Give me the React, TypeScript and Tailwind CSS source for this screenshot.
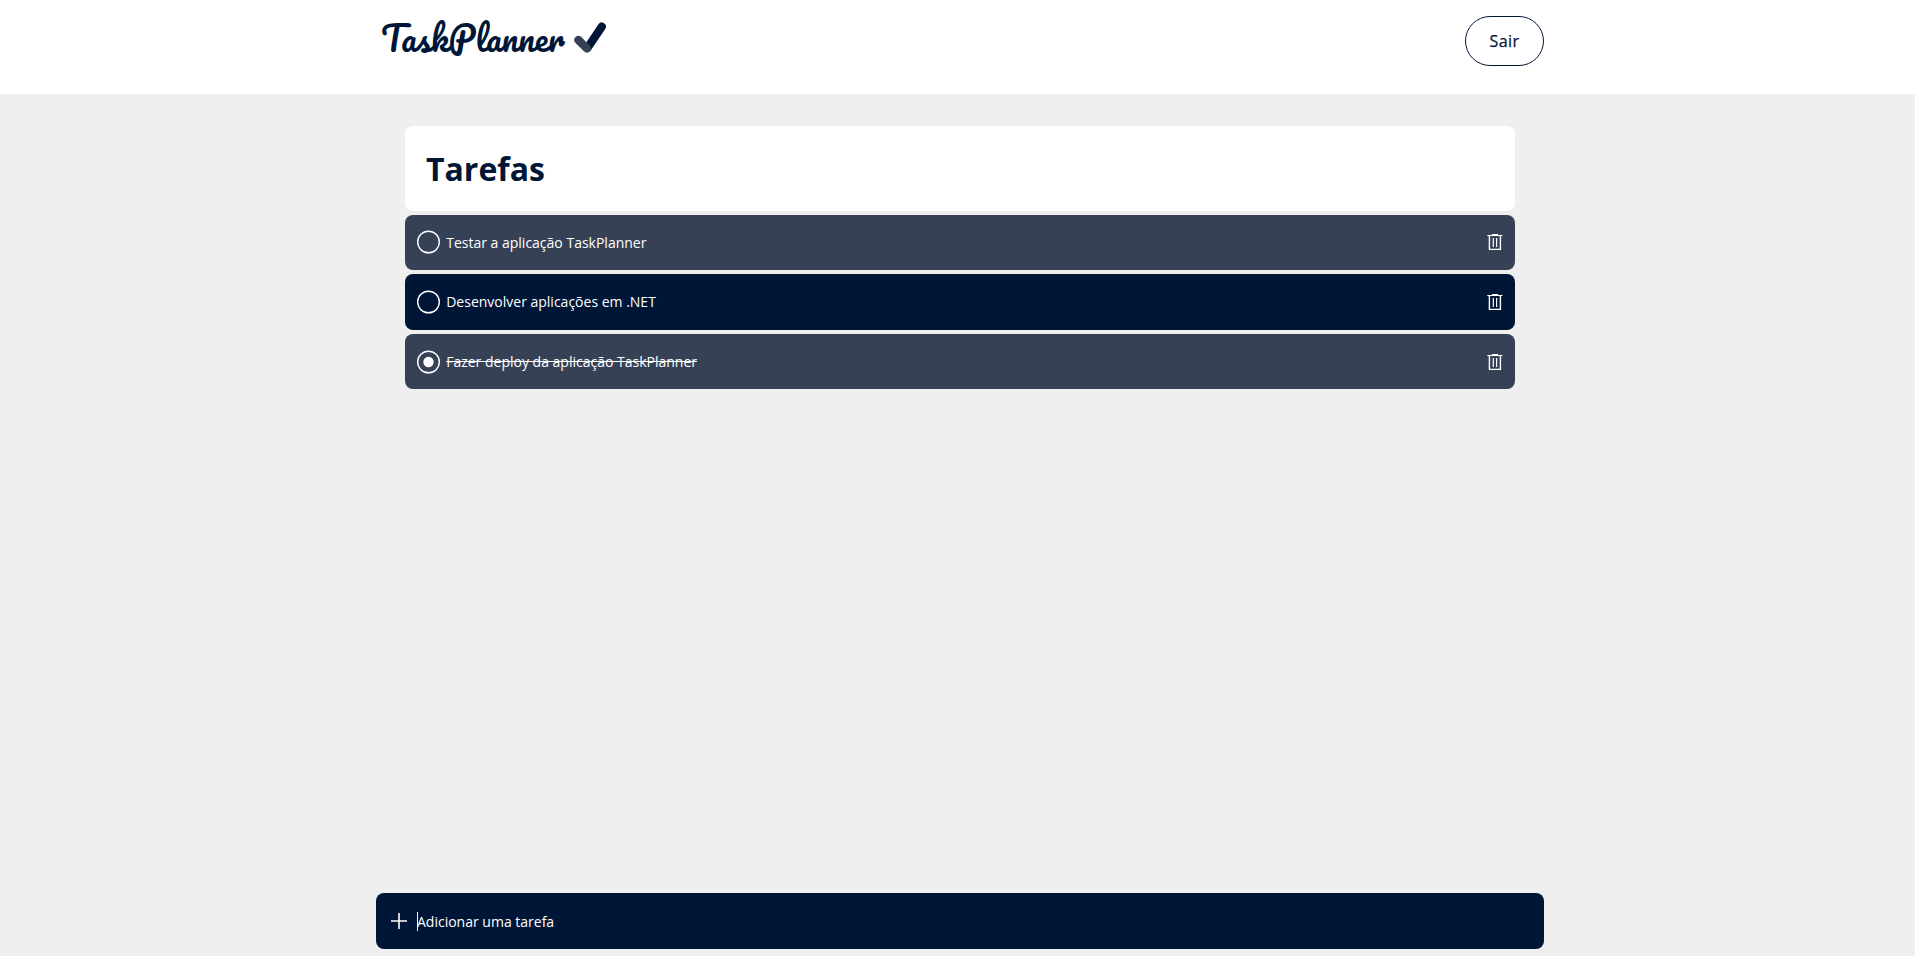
type Task = { title: string; done: boolean; tone: string; label: string };

const tasks: Task[] = [
  {
    title: "Testar a aplicação TaskPlanner",
    done: false,
    tone: "h-[55px] pt-[15px] bg-[#364156]",
    label: "mt-[3px]",
  },
  {
    title: "Desenvolver aplicações em .NET",
    done: false,
    tone: "h-14 pt-4 bg-[#001637]",
    label: "mt-0.5",
  },
  {
    title: "Fazer deploy da aplicação TaskPlanner",
    done: true,
    tone: "h-[55px] pt-4 bg-[#364156]",
    label: "mt-0.5 line-through",
  },
];

function Logo() {
  return (
    <div className="flex h-[80px] w-[240px] items-start pl-[5px]">
      <span className="mt-[10px] w-[192px] font-['Pacifico',cursive] text-[33.4px] leading-[56px] font-normal whitespace-nowrap">
        TaskPlanner
      </span>
      <svg width="36" height="36" viewBox="0 0 36 36" fill="none" className="mt-[21px] block">
        <path d="M28.8 5.6L14.5 27" stroke="#001637" strokeWidth="8.2" strokeLinecap="round" />
        <path d="M5.4 19L13.8 27.4" stroke="#364156" strokeWidth="8.2" strokeLinecap="round" />
      </svg>
    </div>
  );
}

function Trash() {
  return (
    <svg width="16" height="17" viewBox="0 0 16 17" fill="none" stroke="#fff" className="block">
      <path d="M0.3 1.5H15.5" strokeWidth="1.1" />
      <path d="M5 0.6H11" strokeWidth="1.2" />
      <path d="M2.4 1.5V15.4H13.4V1.5" strokeWidth="1.4" />
      <path d="M6.3 4V13M9.6 4V13" strokeWidth="1.2" />
    </svg>
  );
}

function TaskRow({ task }: { task: Task }) {
  return (
    <li className={`flex items-start rounded-lg px-3 text-white ${task.tone}`}>
      <svg width="23" height="24" viewBox="0 0 23 24" className="block shrink-0">
        <circle cx="11.5" cy="12" r="10.8" fill="none" stroke="#fff" strokeWidth="1.4" />
        {task.done && <circle cx="11.5" cy="12" r="5.2" fill="#fff" />}
      </svg>
      <span className={`ml-[6.2px] text-sm ${task.label}`}>{task.title}</span>
      <button className="mt-1 ml-auto" aria-label="Excluir">
        <Trash />
      </button>
    </li>
  );
}

export default function App() {
  return (
    <div className="flex h-screen flex-col bg-[#efefef] font-['Open_Sans','Noto_Sans',sans-serif] text-[#001637]">
      <header className="h-[94px] shrink-0 bg-white">
        <div className="ml-[376px] flex w-[1168px] items-start justify-between">
          <Logo />
          <button className="mt-4 flex h-[50px] w-[79px] items-center justify-center rounded-[25px] border border-[#001637] text-base font-medium tracking-[0.4px] [-webkit-text-stroke:0.25px_#001637]">
            Sair
          </button>
        </div>
      </header>
      <main className="mt-8 ml-[405px] flex w-[1110px] flex-col gap-1">
        <div className="flex h-[85px] items-center rounded-lg bg-white px-[21px]">
          <h1 className="text-[32px] leading-10 font-bold">Tarefas</h1>
        </div>
        <ul className="flex flex-col gap-1">
          {tasks.map((task) => (
            <TaskRow key={task.title} task={task} />
          ))}
        </ul>
      </main>
      <div className="mt-auto mb-[7px] ml-[376px] flex h-14 w-[1168px] items-center rounded-lg bg-[#001637] pl-[15px] text-white">
        <svg width="16" height="16" viewBox="0 0 16 16" stroke="#fff" strokeWidth="1.6" className="block">
          <path d="M8 0V16M0 8H16" />
        </svg>
        <span className="ml-[10px] h-[19px] w-px bg-white" />
        <span className="-ml-px pt-0.5 text-sm">Adicionar uma tarefa</span>
      </div>
    </div>
  );
}
